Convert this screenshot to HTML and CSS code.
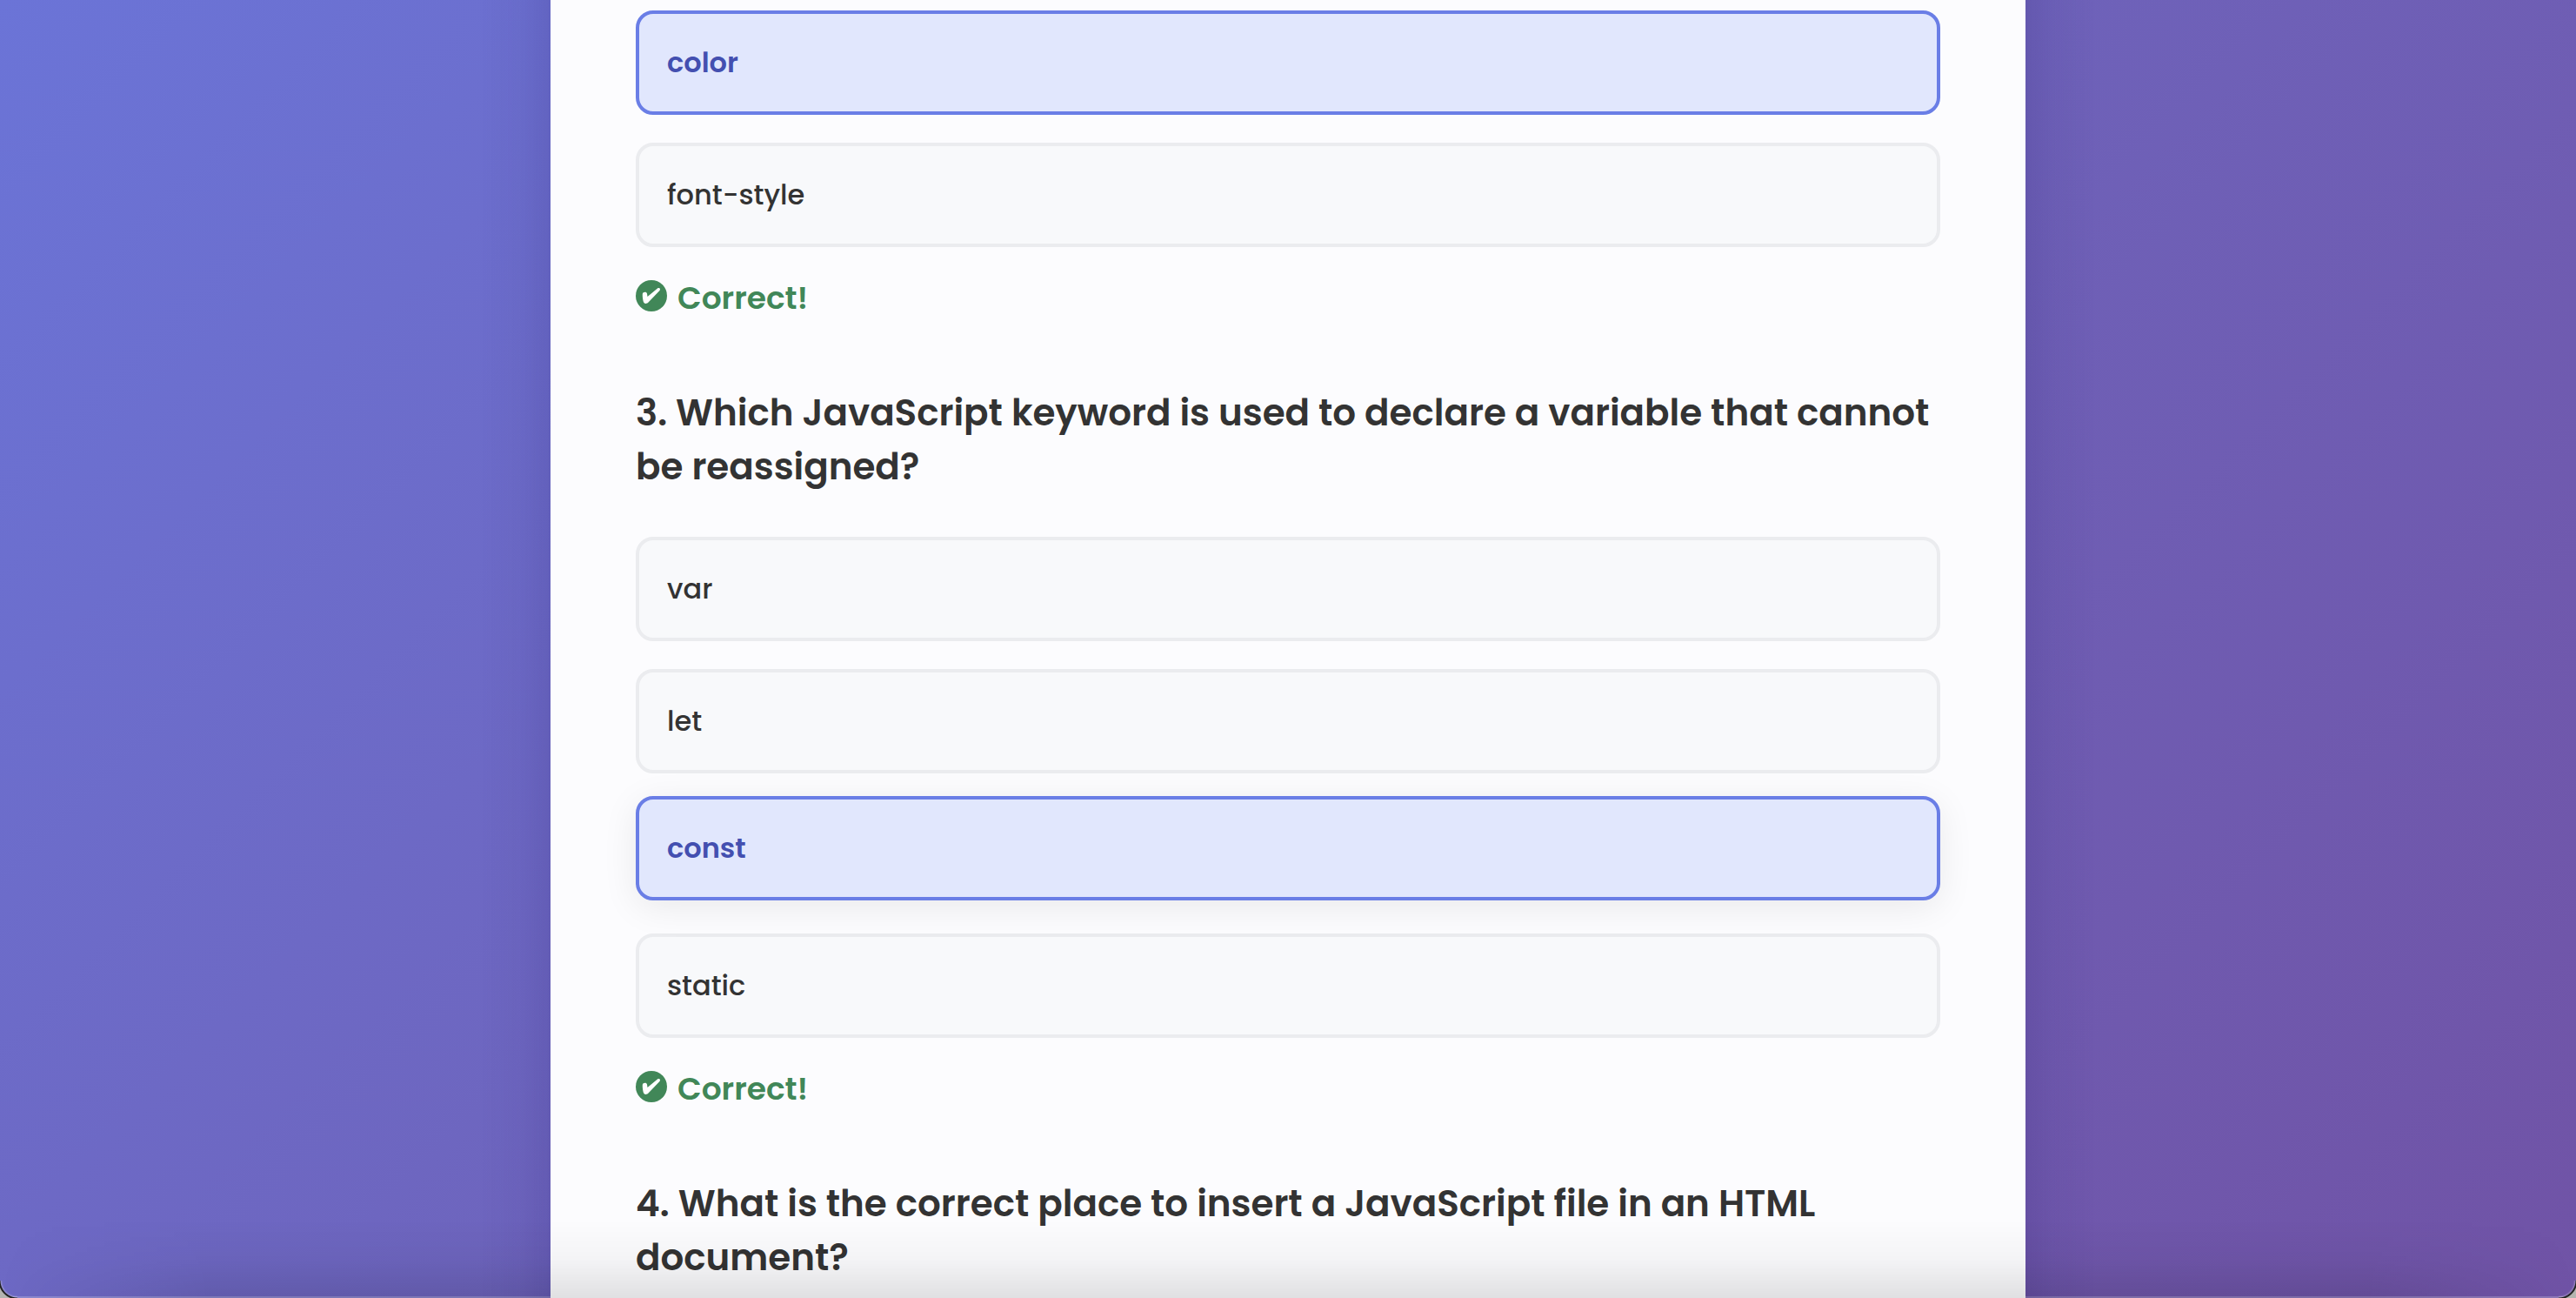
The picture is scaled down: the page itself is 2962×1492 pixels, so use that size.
FILE: index.html
```html
<!DOCTYPE html>
<html lang="en">
<head>
<meta charset="utf-8">
<meta name="viewport" content="width=device-width, initial-scale=1">
<title>Web Quiz</title>
<link rel="stylesheet" href="styles.css">
</head>
<body>
<main class="card">
  <section class="question">
    <div class="options">
      <button type="button" class="option selected" aria-pressed="true">color</button>
      <button type="button" class="option" aria-pressed="false">font-style</button>
    </div>
    <p class="feedback">
      <svg class="tick" viewBox="0 0 36 36" aria-hidden="true"><circle cx="18" cy="18" r="18" fill="currentColor"/><path d="M7.800 16C8 13.500 12.500 13 13 15.500L13.500 19L25 9.500C27 8.300 29 9.800 27.500 12L14.500 25.500C12 28 9.200 27 8.600 24C8 21 7.700 18.500 7.800 16Z" fill="#fff"/></svg>
      <span>Correct!</span>
    </p>
  </section>
  <section class="question">
    <h2 class="title">3. Which JavaScript keyword is used to declare a variable that cannot be reassigned?</h2>
    <div class="options">
      <button type="button" class="option" aria-pressed="false">var</button>
      <button type="button" class="option" aria-pressed="false">let</button>
      <button type="button" class="option selected raised" aria-pressed="true">const</button>
      <button type="button" class="option" aria-pressed="false">static</button>
    </div>
    <p class="feedback">
      <svg class="tick" viewBox="0 0 36 36" aria-hidden="true"><circle cx="18" cy="18" r="18" fill="currentColor"/><path d="M7.800 16C8 13.500 12.500 13 13 15.500L13.500 19L25 9.500C27 8.300 29 9.800 27.500 12L14.500 25.500C12 28 9.200 27 8.600 24C8 21 7.700 18.500 7.800 16Z" fill="#fff"/></svg>
      <span>Correct!</span>
    </p>
  </section>
  <section class="question">
    <h2 class="title">4. What is the correct place to insert a JavaScript file in an HTML document?</h2>
  </section>
</main>
<div class="edge" aria-hidden="true"></div>
<div class="corner corner-left" aria-hidden="true"></div>
<div class="corner corner-right" aria-hidden="true"></div>
</body>
</html>
```
FILE: styles.css
```css
* {
  box-sizing: border-box;
}

body {
  margin: 0;
  min-height: 100vh;
  overflow: hidden;
  background: linear-gradient(135deg, #6b74d7, #6e63bb 50%, #7053a6);
  color: #333;
  font-family: Poppins, Inter, "Open Sans", sans-serif;
}

/* light rim along the bottom of the window */
body::before {
  content: "";
  position: fixed;
  inset: auto 0 0;
  z-index: -1;
  height: 2px;
  background: rgba(255, 255, 255, 0.22);
}

.card {
  position: relative;
  z-index: 0;
  max-width: 1696px;
  min-height: 100vh;
  margin: 0 auto;
  padding: 12px 98px 0;
  background: #fcfcfe;
}

/* soft shade on both sides of the card, even along its height */
.card::before,
.card::after {
  content: "";
  position: absolute;
  top: 0;
  bottom: 0;
  width: 80px;
}

.card::before {
  right: 100%;
  background: linear-gradient(to left, rgba(20, 10, 90, 0.11), rgba(20, 10, 90, 0.04) 40%, transparent);
}

.card::after {
  left: 100%;
  background: linear-gradient(to right, rgba(20, 10, 90, 0.11), rgba(20, 10, 90, 0.04) 40%, transparent);
}

.question {
  margin-bottom: 74px;
}

.title {
  margin: 0 0 49px;
  font-size: 42px;
  font-weight: 600;
  line-height: 62px;
}

.question:last-child,
.question:last-child .title {
  margin-bottom: 0;
}

.options {
  display: flex;
  flex-direction: column;
  gap: 32px;
}

.option {
  height: 120px;
  padding: 0 32px;
  border: 4px solid #ebecef;
  border-radius: 20px;
  background: #f8f9fb;
  color: #333;
  font: inherit;
  font-size: 32px;
  font-weight: 500;
  text-align: left;
}

.selected {
  border-color: #6a7ee6;
  background: #e1e7fd;
  color: #434fb0;
  font-weight: 600;
}

.raised {
  transform: translateY(-6px);
  box-shadow: 0 8px 40px rgba(0, 0, 0, 0.08);
}

.feedback {
  display: flex;
  align-items: center;
  gap: 12px;
  margin: 32px 0 0;
  color: #418758;
  font-size: 36px;
  font-weight: 600;
  line-height: 54px;
}

.tick {
  width: 36px;
  height: 36px;
  margin-bottom: 6px;
}

.edge {
  position: fixed;
  inset: auto 0 0;
  height: 90px;
  background: linear-gradient(transparent, rgba(0, 0, 0, 0.03) 50%, rgba(0, 0, 0, 0.11));
  mask-image: linear-gradient(to right, transparent, #000 240px, #000 calc(100% - 240px), transparent);
  pointer-events: none;
}

/* rounded window corners */
.corner {
  position: fixed;
  bottom: 0;
  width: 20px;
  height: 20px;
}

.corner-left {
  left: 0;
  background: radial-gradient(circle at 100% 0, transparent 17px, rgba(255, 255, 255, 0.25) 19px, #222 20px, #222 21px, #b4b4b0 22px);
}

.corner-right {
  right: 0;
  background: radial-gradient(circle at 0 0, transparent 17px, rgba(255, 255, 255, 0.25) 19px, #222 20px, #222 21px, #b4b4b0 22px);
}
```
